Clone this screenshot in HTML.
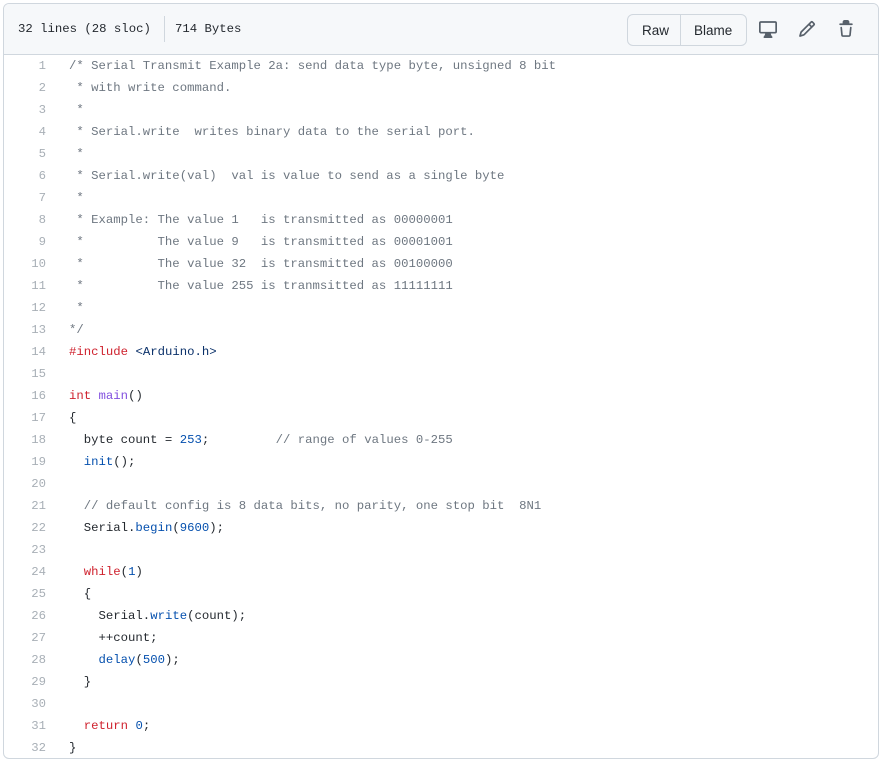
<!DOCTYPE html>
<html><head><meta charset="utf-8"><style>
*{margin:0;padding:0;box-sizing:border-box}
body{width:887px;height:767px;background:#fff;font-family:"Liberation Sans",sans-serif;position:relative;overflow:hidden}
.box{position:absolute;left:3px;top:3px;width:876px;height:756px;border:1px solid #d0d7de;border-radius:6px;overflow:hidden}
.hdr{position:absolute;left:0;top:0;right:0;height:51px;background:#f6f8fa;border-bottom:1px solid #d0d7de}
.meta{position:absolute;left:14px;top:17px;font-family:"Liberation Mono",monospace;font-size:12.3px;color:#24292f;line-height:16px}
.sep{position:absolute;left:160px;top:12px;width:1px;height:26px;background:#d0d7de}
.btns{position:absolute;left:623px;top:10px;width:120px;height:32px;border:1px solid #d0d7de;border-radius:6px;background:#f6f8fa;font-size:13.5px;color:#24292f}
.btns span{position:absolute;top:8px}
.btns i{position:absolute;left:52px;top:0;width:1px;height:30px;background:#d0d7de}
.ic{position:absolute;top:16px}
.code{position:absolute;left:0;top:51px;right:0;font-family:"Liberation Mono",monospace;font-size:12.3px;color:#24292f}
.l{position:absolute;height:22px;line-height:22px;white-space:pre}
.n{position:absolute;width:42px;text-align:right;color:#a8afb6;left:0}
.t{position:absolute;left:65px}
.c{color:#6e7781}.k{color:#cf222e}.f{color:#8250df}.b{color:#0550ae}.s{color:#0a3069}
</style></head><body>
<div class="box">
<div class="hdr">
<div class="meta">32 lines (28 sloc)</div>
<div class="sep"></div>
<div class="meta" style="left:171px">714 Bytes</div>
<div class="btns"><span style="left:14px">Raw</span><i></i><span style="left:66px">Blame</span></div>
<svg class="ic" style="left:755px" width="18" height="18" viewBox="0 0 16 16"><path fill="#57606a" d="M1.75 2.5h12.5a.25.25 0 01.25.25v7.5a.25.25 0 01-.25.25H1.75a.25.25 0 01-.25-.25v-7.5a.25.25 0 01.25-.25zM14.250 1H1.75A1.75 1.75 0 000 2.75v7.5C0 11.216.784 12 1.75 12h3.727c-.1 1.041-.52 1.872-1.292 2.757A.75.75 0 004.75 16h6.5a.75.75 0 00.565-1.243c-.772-.885-1.193-1.716-1.292-2.757h3.727A1.75 1.75 0 0016 10.250v-7.5A1.75 1.75 0 0014.25 1zM9.018 12H6.982a5.72 5.72 0 01-.765 2.5h3.566a5.72 5.720 0 01-.765-2.5z"/></svg>
<svg class="ic" style="left:794px" width="18" height="18" viewBox="0 0 16 16"><path fill="#57606a" d="M11.013 1.427a1.75 1.75 0 012.474 0l1.086 1.086a1.75 1.75 0 010 2.474l-8.61 8.61c-.21.21-.47.364-.756.445l-3.251.93a.75.75 0 01-.927-.928l.929-3.25a1.75 1.75 0 01.445-.758l8.61-8.61zm1.414 1.06a.25.25 0 00-.354 0L10.811 3.75l1.439 1.44 1.263-1.263a.25.25 0 000-.354l-1.086-1.086zM11.189 6.25L9.75 4.81l-6.286 6.287a.25.25 0 00-.064.108l-.558 1.953 1.953-.558a.25.25 0 00.108-.064l6.286-6.286z"/></svg>
<svg class="ic" style="left:833px" width="18" height="18" viewBox="0 0 16 16"><path fill="#57606a" d="M6.5 1.75a.25.25 0 01.25-.25h2.5a.25.25 0 01.25.25V3h-3V1.75zm4.5 0V3h2.25a.75.75 0 010 1.5H2.75a.75.75 0 010-1.5H5V1.75C5 .784 5.784 0 6.75 0h2.5C10.216 0 11 .784 11 1.75zM4.496 6.675a.75.75 0 10-1.492.15l.66 6.6A1.75 1.75 0 005.405 15h5.19c.9 0 1.652-.681 1.741-1.576l.66-6.6a.75.75 0 00-1.492-.149l-.66 6.6a.25.25 0 01-.249.225h-5.19a.25.25 0 01-.249-.225l-.66-6.6z"/></svg>
</div>
<div class="code">
<div class="l" style="top:0"><span class="n">1</span><span class="t c">/* Serial Transmit Example 2a: send data type byte, unsigned 8 bit</span></div>
<div class="l" style="top:22px"><span class="n">2</span><span class="t c"> * with write command.</span></div>
<div class="l" style="top:44px"><span class="n">3</span><span class="t c"> *</span></div>
<div class="l" style="top:66px"><span class="n">4</span><span class="t c"> * Serial.write  writes binary data to the serial port.</span></div>
<div class="l" style="top:88px"><span class="n">5</span><span class="t c"> *</span></div>
<div class="l" style="top:110px"><span class="n">6</span><span class="t c"> * Serial.write(val)  val is value to send as a single byte</span></div>
<div class="l" style="top:132px"><span class="n">7</span><span class="t c"> *</span></div>
<div class="l" style="top:154px"><span class="n">8</span><span class="t c"> * Example: The value 1   is transmitted as 00000001</span></div>
<div class="l" style="top:176px"><span class="n">9</span><span class="t c"> *          The value 9   is transmitted as 00001001</span></div>
<div class="l" style="top:198px"><span class="n">10</span><span class="t c"> *          The value 32  is transmitted as 00100000</span></div>
<div class="l" style="top:220px"><span class="n">11</span><span class="t c"> *          The value 255 is tranmsitted as 11111111</span></div>
<div class="l" style="top:242px"><span class="n">12</span><span class="t c"> *</span></div>
<div class="l" style="top:264px"><span class="n">13</span><span class="t c">*/</span></div>
<div class="l" style="top:286px"><span class="n">14</span><span class="t"><span class="k">#include</span> <span class="s">&lt;Arduino.h&gt;</span></span></div>
<div class="l" style="top:308px"><span class="n">15</span></div>
<div class="l" style="top:330px"><span class="n">16</span><span class="t"><span class="k">int</span> <span class="f">main</span>()</span></div>
<div class="l" style="top:352px"><span class="n">17</span><span class="t">{</span></div>
<div class="l" style="top:374px"><span class="n">18</span><span class="t">  byte count = <span class="b">253</span>;         <span class="c">// range of values 0-255</span></span></div>
<div class="l" style="top:396px"><span class="n">19</span><span class="t">  <span class="b">init</span>();</span></div>
<div class="l" style="top:418px"><span class="n">20</span></div>
<div class="l" style="top:440px"><span class="n">21</span><span class="t">  <span class="c">// default config is 8 data bits, no parity, one stop bit  8N1</span></span></div>
<div class="l" style="top:462px"><span class="n">22</span><span class="t">  Serial.<span class="b">begin</span>(<span class="b">9600</span>);</span></div>
<div class="l" style="top:484px"><span class="n">23</span></div>
<div class="l" style="top:506px"><span class="n">24</span><span class="t">  <span class="k">while</span>(<span class="b">1</span>)</span></div>
<div class="l" style="top:528px"><span class="n">25</span><span class="t">  {</span></div>
<div class="l" style="top:550px"><span class="n">26</span><span class="t">    Serial.<span class="b">write</span>(count);</span></div>
<div class="l" style="top:572px"><span class="n">27</span><span class="t">    ++count;</span></div>
<div class="l" style="top:594px"><span class="n">28</span><span class="t">    <span class="b">delay</span>(<span class="b">500</span>);</span></div>
<div class="l" style="top:616px"><span class="n">29</span><span class="t">  }</span></div>
<div class="l" style="top:638px"><span class="n">30</span></div>
<div class="l" style="top:660px"><span class="n">31</span><span class="t">  <span class="k">return</span> <span class="b">0</span>;</span></div>
<div class="l" style="top:682px"><span class="n">32</span><span class="t">}</span></div>
</div>
</div>
</body></html>
